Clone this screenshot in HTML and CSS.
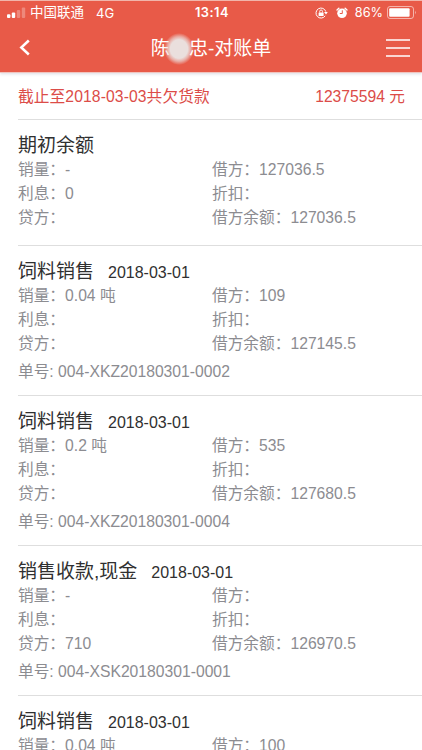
FILE: index.html
```html
<!DOCTYPE html>
<html lang="zh-CN">
<head>
<meta charset="utf-8">
<meta name="viewport" content="width=device-width, initial-scale=1">
<title>对账单</title>
<link rel="stylesheet" href="styles.css">
</head>
<body>
<header class="header">
  <div class="status">
    <div class="status-left">
      <svg class="signal" width="19" height="12" viewBox="0 0 19 12" fill="#fff"><rect x="0" y="7.2" width="3.4" height="3.8" rx="1"/><rect x="4.8" y="5.4" width="3.4" height="5.6" rx="1"/><rect x="9.8" y="3" width="3.4" height="8" rx="1" opacity=".28"/><rect x="14.8" y="0.5" width="3.4" height="10.5" rx="1" opacity=".28"/></svg>
      <span class="carrier">中国联通</span>
      <span class="network">4G</span>
    </div>
    <time class="clock">13:14</time>
    <div class="status-right">
      <svg class="lock" width="13" height="12" viewBox="0 0 13 12" fill="none" stroke="#fff"><path d="M10.2 8.8A5 5 0 1 1 10.8 4.6" stroke-width="1"/><path d="M9 5.1h3.8L11 7.4z" fill="#fff" stroke="none"/><rect x="3.6" y="5.4" width="5" height="3.6" rx=".5" fill="#fff" stroke="none"/><path d="M4.7 5.5V4.4a1.4 1.4 0 0 1 2.8 0v1.1" stroke-width=".9"/></svg>
      <svg class="alarm" width="12" height="12" viewBox="0 0 12 12"><circle cx="6" cy="6.3" r="4.8" fill="#fff"/><path d="M1 3 2.9 1.2M11 3 9.1 1.2" stroke="#fff" stroke-width="1.4" stroke-linecap="round"/><path d="M6.3 3.3v3.2H3.8" fill="none" stroke="#e85a48" stroke-width="1"/></svg>
      <span class="percent">86%</span>
      <svg class="battery" width="30" height="13" viewBox="0 0 30 13"><rect x=".5" y=".5" width="26" height="12" rx="2.5" fill="none" stroke="#fff" opacity=".55"/><rect x="2.2" y="2.2" width="20.4" height="8.6" rx="1" fill="#fff"/><path d="M28 4.6q1.6 1.9 0 3.8z" fill="#fff" opacity=".6"/></svg>
    </div>
  </div>
  <nav class="navbar">
    <svg class="back" width="12" height="18" viewBox="0 0 12 18" fill="none" stroke="#fff" stroke-width="2.5"><path d="M9.8 1.5 2.3 8.5l7.5 7"/></svg>
    <h1 class="nav-title">陈<span class="mask"></span>忠-对账单</h1>
    <svg class="menu" width="24" height="19" viewBox="0 0 24 19" stroke="#fff" stroke-width="1.5"><path d="M0 1h24M0 9h24M0 17h24"/></svg>
  </nav>
</header>
<main class="content">
  <section class="summary"><span class="summary-label">截止至2018-03-03共欠货款</span><span>12375594 元</span></section>
  <section class="entry opening">
    <h2 class="entry-title">期初余额</h2>
    <div class="fields"><span>销量：-</span><span>借方：127036.5</span><span>利息：0</span><span>折扣：</span><span>贷方：</span><span>借方余额：127036.5</span></div>
  </section>
  <section class="entry">
    <h2 class="entry-title">饲料销售<time>2018-03-01</time></h2>
    <div class="fields"><span>销量：0.04 吨</span><span>借方：109</span><span>利息：</span><span>折扣：</span><span>贷方：</span><span>借方余额：127145.5</span></div>
    <p class="order">单号: 004-XKZ20180301-0002</p>
  </section>
  <section class="entry">
    <h2 class="entry-title">饲料销售<time>2018-03-01</time></h2>
    <div class="fields"><span>销量：0.2 吨</span><span>借方：535</span><span>利息：</span><span>折扣：</span><span>贷方：</span><span>借方余额：127680.5</span></div>
    <p class="order">单号: 004-XKZ20180301-0004</p>
  </section>
  <section class="entry">
    <h2 class="entry-title">销售收款,现金<time>2018-03-01</time></h2>
    <div class="fields"><span>销量：-</span><span>借方：</span><span>利息：</span><span>折扣：</span><span>贷方：710</span><span>借方余额：126970.5</span></div>
    <p class="order">单号: 004-XSK20180301-0001</p>
  </section>
  <section class="entry last">
    <h2 class="entry-title">饲料销售<time>2018-03-01</time></h2>
    <div class="fields"><span>销量：0.04 吨</span><span>借方：100</span></div>
  </section>
</main>
</body>
</html>
```
FILE: styles.css
```css
* { box-sizing: border-box; }
body {
  margin: 0;
  height: 750px;
  overflow: hidden;
  display: flex;
  flex-direction: column;
  background: #fff;
  color: #333;
  font-family: "Liberation Sans", "Noto Sans CJK SC", sans-serif;
  font-size: 15.7px;
  font-weight: 400;
}
.header {
  flex: none;
  height: 73px;
  border-top: 1px solid #f1b5aa;
  border-bottom: 1px solid #f0c4be;
  background: #e85a48;
  color: #fff;
  box-shadow: 0 1px 3px rgba(60, 60, 100, .18);
}
.status {
  height: 23px;
  display: grid;
  grid-template-columns: 1fr auto 1fr;
  align-items: center;
  padding: 1px 5px 0 7px;
  font-size: 13px;
  line-height: 22px;
}
.status-left, .status-right { display: flex; align-items: center; }
.carrier { margin-left: 4px; font-size: 13.5px; }
.network { margin-left: 12px; font-family: Inter, sans-serif; }
.clock { font: 600 12.8px/22px Inter, sans-serif; letter-spacing: .5px; }
.status-right { justify-content: flex-end; }
.lock { margin-top: -1px; }
.alarm { margin: -1px 0 0 8px; }
.percent { margin-left: 7px; font-family: Inter, sans-serif; font-size: 12.7px; }
.battery { margin: -1px 0 0 4px; }
.navbar {
  height: 48px;
  display: grid;
  grid-template-columns: 1fr auto 1fr;
  align-items: center;
  padding: 0 12px 0 19px;
}
.nav-title {
  display: flex;
  align-items: center;
  margin: 1px 0 0 -7px;
  font-size: 19px;
  font-weight: 400;
  line-height: 28px;
}
.mask {
  width: 30px;
  height: 32px;
  margin: 0 -5.3px;
  border-radius: 50%;
  background: radial-gradient(closest-side, #eadfdd 0%, #eadfdd 58%, rgba(234, 223, 221, .6) 78%, rgba(234, 223, 221, 0) 100%);
}
.menu { justify-self: end; }
.content { padding-left: 18px; }
.summary {
  height: 47px;
  display: flex;
  justify-content: space-between;
  padding: 11px 17px 0 0;
  border-bottom: 1px solid #dedede;
  color: #dc4c48;
  line-height: 26px;
}
.summary-label { letter-spacing: .1px; }
.entry {
  height: 150px;
  padding-top: 13px;
  border-bottom: 1px solid #dedede;
}
.opening { height: 126px; }
.last { height: 54px; overflow: hidden; border-bottom: 0; }
.entry-title {
  display: flex;
  align-items: baseline;
  margin: 0;
  height: 25.4px;
  color: #303030;
  font-size: 19px;
  font-weight: 400;
  line-height: 26px;
}
.entry-title time { margin-left: 14px; font-size: 16px; }
.fields {
  display: grid;
  grid-template-columns: 194px 1fr;
  grid-auto-rows: 23.6px;
  color: #8c8c91;
  line-height: 23.6px;
}
.order {
  margin: 5px 0 0;
  color: #8c8c91;
  line-height: 24px;
}
```
